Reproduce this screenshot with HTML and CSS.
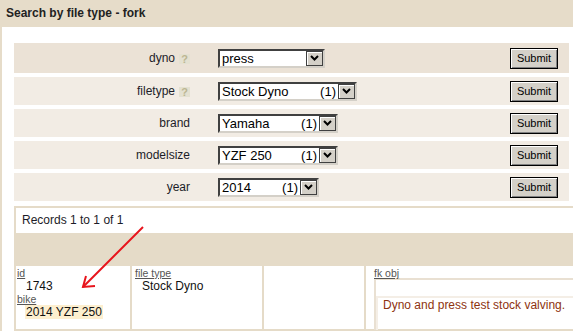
FILE: index.html
```html
<!DOCTYPE html>
<html lang="en">
<head>
    <meta charset="UTF-8">
    <title>Search by file type - fork</title>
    <link rel="stylesheet" href="styles.css">
</head>
<body>
    <div class="panel">
        <div class="panel-head">Search by file type - fork</div>
        <div class="panel-body">
            <form class="search-form">
                <div class="field-row field-row-active">
                    <div class="field-label">dyno<span class="hint">?</span></div>
                    <div class="combo combo-dyno">
                        <span class="combo-text">press</span>
                        <span class="combo-btn"><svg width="9" height="6" viewBox="0 0 9 6"><polyline points="1,1 4.5,4.5 8,1" fill="none" stroke="#000" stroke-width="2"/></svg></span>
                    </div>
                    <button class="submit" type="button">Submit</button>
                </div>
                <div class="field-row">
                    <div class="field-label">filetype<span class="hint">?</span></div>
                    <div class="combo combo-filetype">
                        <span class="combo-text">Stock Dyno</span>
                        <span class="combo-count">(1)</span>
                        <span class="combo-btn"><svg width="9" height="6" viewBox="0 0 9 6"><polyline points="1,1 4.5,4.5 8,1" fill="none" stroke="#000" stroke-width="2"/></svg></span>
                    </div>
                    <button class="submit" type="button">Submit</button>
                </div>
                <div class="field-row">
                    <div class="field-label">brand</div>
                    <div class="combo combo-brand">
                        <span class="combo-text">Yamaha</span>
                        <span class="combo-count">(1)</span>
                        <span class="combo-btn"><svg width="9" height="6" viewBox="0 0 9 6"><polyline points="1,1 4.5,4.5 8,1" fill="none" stroke="#000" stroke-width="2"/></svg></span>
                    </div>
                    <button class="submit" type="button">Submit</button>
                </div>
                <div class="field-row">
                    <div class="field-label">modelsize</div>
                    <div class="combo combo-model">
                        <span class="combo-text">YZF 250</span>
                        <span class="combo-count">(1)</span>
                        <span class="combo-btn"><svg width="9" height="6" viewBox="0 0 9 6"><polyline points="1,1 4.5,4.5 8,1" fill="none" stroke="#000" stroke-width="2"/></svg></span>
                    </div>
                    <button class="submit" type="button">Submit</button>
                </div>
                <div class="field-row">
                    <div class="field-label">year</div>
                    <div class="combo combo-year">
                        <span class="combo-text">2014</span>
                        <span class="combo-count">(1)</span>
                        <span class="combo-btn"><svg width="9" height="6" viewBox="0 0 9 6"><polyline points="1,1 4.5,4.5 8,1" fill="none" stroke="#000" stroke-width="2"/></svg></span>
                    </div>
                    <button class="submit" type="button">Submit</button>
                </div>
            </form>

            <div class="records">
                <div class="records-count">Records 1 to 1 of 1</div>
                <div class="records-band"></div>
                <div class="record-grid">
                    <div class="cell">
                        <div class="fld-label"><u>id</u></div>
                        <div class="fld-value">1743</div>
                        <div class="fld-label"><u>bike</u></div>
                        <div class="fld-value"><span class="hl">2014 YZF 250</span></div>
                    </div>
                    <div class="cell cell-type">
                        <div class="fld-label"><u>file type</u></div>
                        <div class="fld-value">Stock Dyno</div>
                    </div>
                    <div class="cell"></div>
                    <div class="cell cell-obj">
                        <div class="fld-label"><u>fk obj</u></div>
                        <div class="obj-box">
                            <div class="obj-inner">Dyno and press test stock valving.</div>
                        </div>
                    </div>
                </div>
            </div>
        </div>

        <svg class="arrow" width="80" height="80" viewBox="0 0 80 80">
            <line x1="67" y1="2" x2="7" y2="62" stroke="#e8141c" stroke-width="2"/>
            <polyline points="10,51 7,62 19,61" fill="none" stroke="#e8141c" stroke-width="2"/>
        </svg>
    </div>
</body>
</html>
```

FILE: styles.css
```css
* {
    margin: 0;
    padding: 0;
    box-sizing: border-box;
}

body {
    font-family: 'Liberation Sans', Arial, sans-serif;
    font-size: 12px;
    color: #1c1c28;
    background: #fff;
    overflow: hidden;
}

.panel {
    position: relative;
    width: 573px;
}

.panel-head {
    height: 27px;
    line-height: 27px;
    padding-left: 6px;
    background: #e6dcc9;
    font-weight: 700;
    color: #222;
}

.panel-body {
    border-left: 2px solid #e6dcc9;
    padding: 16px 4px 0 12px;
}

.search-form {
    display: flex;
    flex-direction: column;
    gap: 4px;
}

.field-row {
    display: flex;
    align-items: center;
    height: 28px;
    background: #f2ece4;
}

.field-row-active {
    height: 30px;
    background: #ebe2d6;
}

.field-label {
    width: 176px;
    margin-right: 28px;
    text-align: right;
}

.hint {
    display: inline-block;
    width: 11px;
    height: 10px;
    margin-left: 4px;
    background: #e4e1d1;
    color: #bcb692;
    font-size: 11px;
    font-weight: 700;
    line-height: 10px;
    text-align: center;
    vertical-align: -1px;
}

/* classic windows combo box */
.combo {
    display: flex;
    align-items: center;
    height: 19px;
    border: 2px solid;
    border-color: #404040 #d4d0c8 #d4d0c8 #404040;
    background: #fff;
    font-size: 13px;
    color: #000;
}

.combo-dyno { width: 107px; }
.combo-filetype { width: 139px; }
.combo-brand { width: 120px; }
.combo-model { width: 120px; }
.combo-year { width: 101px; }

.combo-text {
    flex: 1;
    padding-left: 2px;
    line-height: 15px;
    white-space: nowrap;
}

.combo-count {
    line-height: 15px;
    margin-right: 2px;
}

.combo-btn {
    display: flex;
    align-items: center;
    justify-content: center;
    width: 17px;
    height: 15px;
    background: #d4d0c8;
    border: 1px solid #404040;
    box-shadow: inset 1px 1px 0 #fff;
}

.submit {
    margin-left: auto;
    margin-right: 11px;
    width: 48px;
    height: 21px;
    background: #d4d0c8;
    border: 1px solid #000;
    box-shadow: inset 1px 1px 0 #fff, inset -1px -1px 0 #808080;
    font-family: 'Liberation Sans', Arial, sans-serif;
    font-size: 11px;
    color: #000;
}

.records {
    margin-top: 5px;
    margin-right: -30px;
    border: 2px solid #e5dbc8;
    background: #e5dbc8;
}

.records-count {
    height: 25px;
    line-height: 25px;
    padding-left: 6px;
    background: #fff;
}

.records-band {
    height: 33px;
}

.record-grid {
    display: grid;
    grid-template-columns: 114px 130px 100px 1fr;
    gap: 2px;
}

.cell {
    height: 63px;
    padding: 2px 0 0 1px;
    background: #fff;
}

.cell-type {
    padding-left: 3px;
}

.cell-obj {
    padding-left: 8px;
}

.fld-label {
    font-size: 10.5px;
    line-height: 11px;
    color: #555;
}

.fld-value {
    line-height: 15px;
    padding-left: 9px;
    color: #111;
}

.cell-type .fld-value {
    padding-left: 7px;
}

.hl {
    background: #fdefcf;
    padding: 0 1px;
    margin-left: -1px;
}

.obj-box {
    margin-top: -1px;
    height: 52px;
    padding-top: 16px;
    border-top: 2px solid #e9e0d2;
    border-left: 2px solid #e9e0d2;
}

.obj-inner {
    height: 100%;
    padding-left: 5px;
    border-top: 2px solid #f4eee6;
    border-left: 2px solid #f4eee6;
    line-height: 14px;
    color: #8e3310;
}

.arrow {
    position: absolute;
    left: 76px;
    top: 225px;
    pointer-events: none;
}
```
